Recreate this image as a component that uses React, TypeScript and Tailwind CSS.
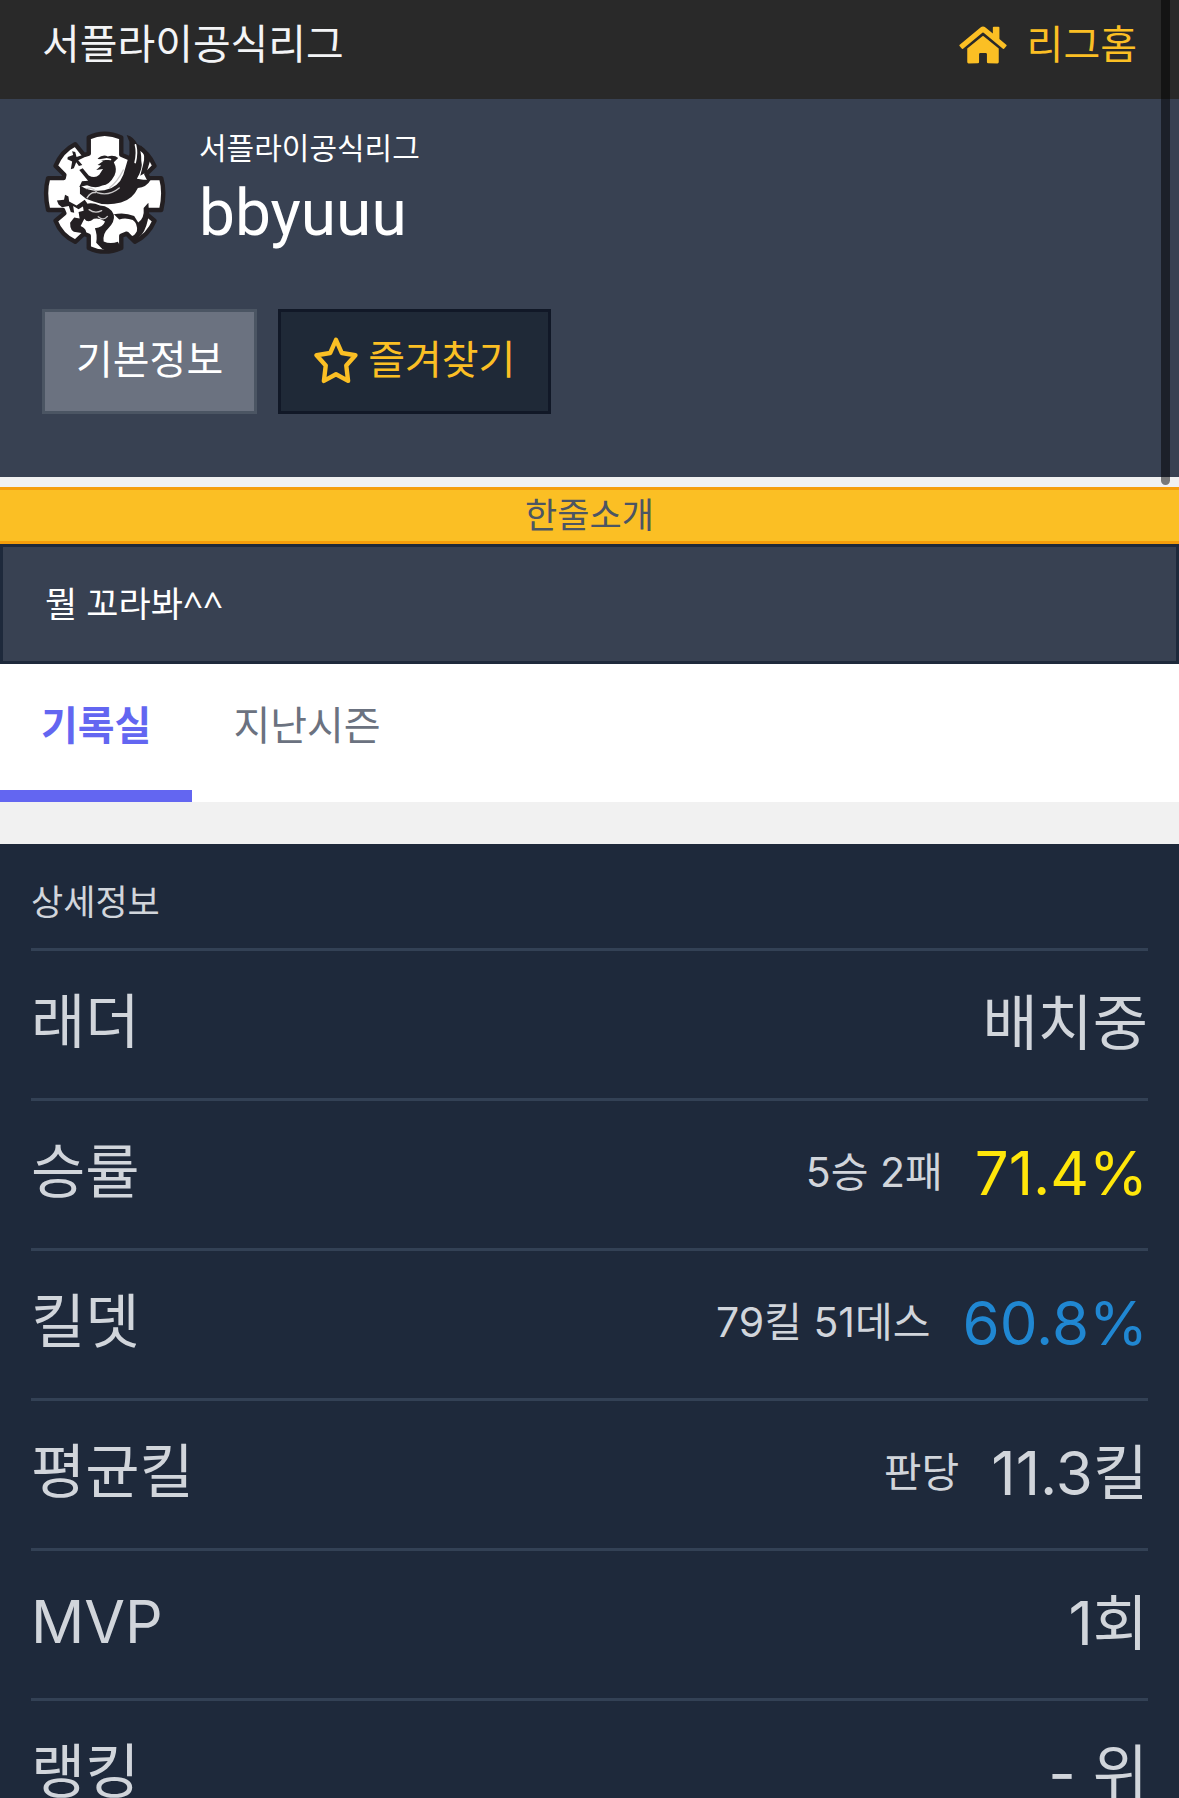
import React from 'react';
import { FaHome } from 'react-icons/fa';

const records = [
  { label: '래더', note: '', value: '배치중', color: 'text-[#d1d5db]' },
  { label: '승률', note: '5승 2패', value: '71.4%', color: 'text-[#ffe60a]' },
  { label: '킬뎃', note: '79킬 51데스', value: '60.8%', color: 'text-[#2087d2]' },
  { label: '평균킬', note: '판당', value: '11.3킬', color: 'text-[#d1d5db]' },
  { label: 'MVP', note: '', value: '1회', color: 'text-[#d1d5db]' },
  { label: '랭킹', note: '', value: '- 위', color: 'text-[#d1d5db]' },
];

function StarIcon() {
  return (
    <svg viewBox="0 0 120 128" className="h-12 w-11" fill="none" stroke="currentColor" strokeWidth="12" strokeLinejoin="round" aria-hidden="true">
      <path d="M60 9 L76 45 L113 51 L88 79 L93 121 L60 103 L27 121 L32 79 L7 51 L44 45 Z" />
    </svg>
  );
}

function Emblem() {
  return (
    <svg viewBox="24 32 366 366" className="size-[124px] shrink-0" role="img" aria-label="엠블럼">
      <g fill="#fff" stroke="#231f22" strokeWidth="13" strokeLinejoin="round">
        <path d="M162 54 Q208 32 258 54 V105 L284 116 L304 80 Q338 98 356 138 L332 162 L338 174 H376 Q388 216 376 268 H336 L332 280 L356 300 Q338 342 298 362 L274 338 L258 344 V380 Q208 402 162 380 V344 L148 338 L122 362 Q80 342 64 300 L90 278 L86 268 H42 Q30 216 42 174 H88 L90 164 L64 138 Q82 94 122 74 L148 106 L162 102 Z" />
      </g>
      <g fill="#231f22">
        <path d="M100 112 L116 106 L113 95 L122 97 L126 112 L144 106 L148 113 L131 121 L143 135 L133 138 L125 127 L118 145 L109 148 L113 125 L99 118 Z" />
        <path d="M68 240 L89 238 L92 223 L102 228 L104 243 L126 255 L150 238 L158 249 L132 266 L116 256 L119 276 L109 274 L103 256 L83 260 L73 252 Z" />
        <path d="M188 116 Q204 103 218 110 Q238 105 249 115 L236 127 Q247 148 238 166 Q223 194 202 196 Q182 206 157 195 L134 200 L142 183 L160 182 L134 150 L144 145 L162 166 Q180 176 193 164 L204 147 L184 150 L199 137 L188 135 L204 124 Z" />
        <path d="M136 196 Q166 216 208 210 Q250 202 264 164 Q272 138 282 103 L282 67 L274 47 Q296 52 307 77 Q318 94 317 123 Q323 144 304 176 L323 179 L345 179 Q332 202 307 203 Q292 236 257 246 Q211 258 176 243 L154 235 L136 220 Z" />
        <path d="M314 76 Q340 96 343 123 L333 156 L314 167 L322 136 Q332 108 314 76 Z" />
        <path d="M144 253 Q170 243 195 255 Q226 257 236 282 Q240 303 218 324 Q203 337 206 361 Q225 370 248 362 L257 379 Q226 398 202 383 L184 365 Q188 340 180 322 Q204 320 210 302 Q194 290 177 294 Q159 309 149 294 L138 315 Q156 323 155 338 L127 334 Q106 334 107 306 L119 290 L135 293 L132 274 L147 270 Z" />
        <path d="M236 281 Q268 274 296 286 L308 305 Q327 292 324 262 L338 247 Q342 286 332 314 Q321 348 296 358 Q276 354 274 338 Q291 356 304 331 Q307 308 292 298 Q271 289 252 296 Z" />
      </g>
      <g fill="none" stroke="#c9c7c8" strokeWidth="4" strokeLinecap="round">
        <path d="M155 205 Q172 199 187 217 Q222 228 252 203" />
        <path d="M157 232 Q169 214 182 217" />
        <path d="M264 150 Q247 184 224 202" />
        <path d="M163 267 Q180 280 200 270 M190 288 Q205 301 217 287" />
      </g>
      <g fill="none" stroke="#fff" strokeWidth="5" strokeLinecap="round">
        <path d="M300 76 Q306 98 299 128" />
        <path d="M194 121 L215 117 L226 119" />
      </g>
    </svg>
  );
}

function Header() {
  return (
    <header className="flex h-[99px] items-center justify-between bg-[#292929] px-[42px] pb-2.5">
      <h1 className="text-[41px] text-[#f3f4f6]">서플라이공식리그</h1>
      <a href="#" className="flex items-center gap-5 text-[40px] text-[#fbbf24]">
        <FaHome className="h-[42px] w-12" />
        리그홈
      </a>
    </header>
  );
}

function Profile() {
  return (
    <section className="bg-[#384152] px-[42px] pt-[31px] pb-[63px] text-white">
      <div className="flex items-start gap-[33px]">
        <Emblem />
        <div>
          <p className="text-[30px] leading-9">서플라이공식리그</p>
          <h2 className="font-[Roboto,sans-serif] text-[64px] leading-[96px]">bbyuuu</h2>
        </div>
      </div>
      <div className="mt-[47px] flex gap-[21px] text-[40px]">
        <button type="button" className="h-[105px] border-3 border-[#4b5563] bg-[#6b7280] px-[31px] pb-1">
          기본정보
        </button>
        <button type="button" className="flex h-[105px] items-center gap-2.5 border-3 border-[#111827] bg-[#1f2937] px-[33px] pb-1 text-[#fbbf24]">
          <StarIcon />
          즐겨찾기
        </button>
      </div>
    </section>
  );
}

function Tabs() {
  return (
    <nav className="flex bg-white text-[40px]">
      <a href="#" className="flex h-[138px] items-center border-b-12 border-[#6366f1] px-[41px] pb-0.5 font-bold text-[#6366f1]">
        기록실
      </a>
      <a href="#" className="flex h-[138px] items-center border-b-12 border-transparent px-[41px] pb-0.5 text-[#6b7280]">
        지난시즌
      </a>
    </nav>
  );
}

function Records() {
  return (
    <section className="bg-[#1e293b] px-[31px] text-[#d1d5db]">
      <h3 className="flex h-[104px] items-center pt-3 text-[35px]">상세정보</h3>
      <dl>
        {records.map((r) => (
          <div key={r.label} className="flex h-[150px] items-center justify-between border-t-3 border-[#334155] pb-1 text-[60px]">
            <dt className="text-[59px]">{r.label}</dt>
            <dd className="flex items-center gap-8">
              {r.note && <span className="text-[41px]">{r.note}</span>}
              <span className={r.color}>{r.value}</span>
            </dd>
          </div>
        ))}
      </dl>
    </section>
  );
}

export default function App() {
  return (
    <div className="relative h-screen overflow-hidden bg-[#f1f1f1] font-[Inter,'Noto_Sans_CJK_KR',sans-serif]">
      <Header />
      <Profile />
      <section className="mt-2.5">
        <h3 className="flex h-[57px] items-center justify-center border-y-3 border-[#f59e0b] bg-[#fbbf24] text-[35px] leading-none text-[#4b5563]">
          한줄소개
        </h3>
        <p className="flex h-[120px] items-center border-3 border-[#1e293b] bg-[#384152] px-[42px] font-['Noto_Sans','Noto_Sans_CJK_KR',sans-serif] text-[35px] text-white">
          뭘 꼬라봐^^
        </p>
      </section>
      <Tabs />
      <div className="mt-[42px]">
        <Records />
      </div>
      {/* scroll thumb over the page */}
      <div className="absolute top-0 right-[9px] h-[485px] w-[9px] rounded-b-full bg-black/50" />
    </div>
  );
}
